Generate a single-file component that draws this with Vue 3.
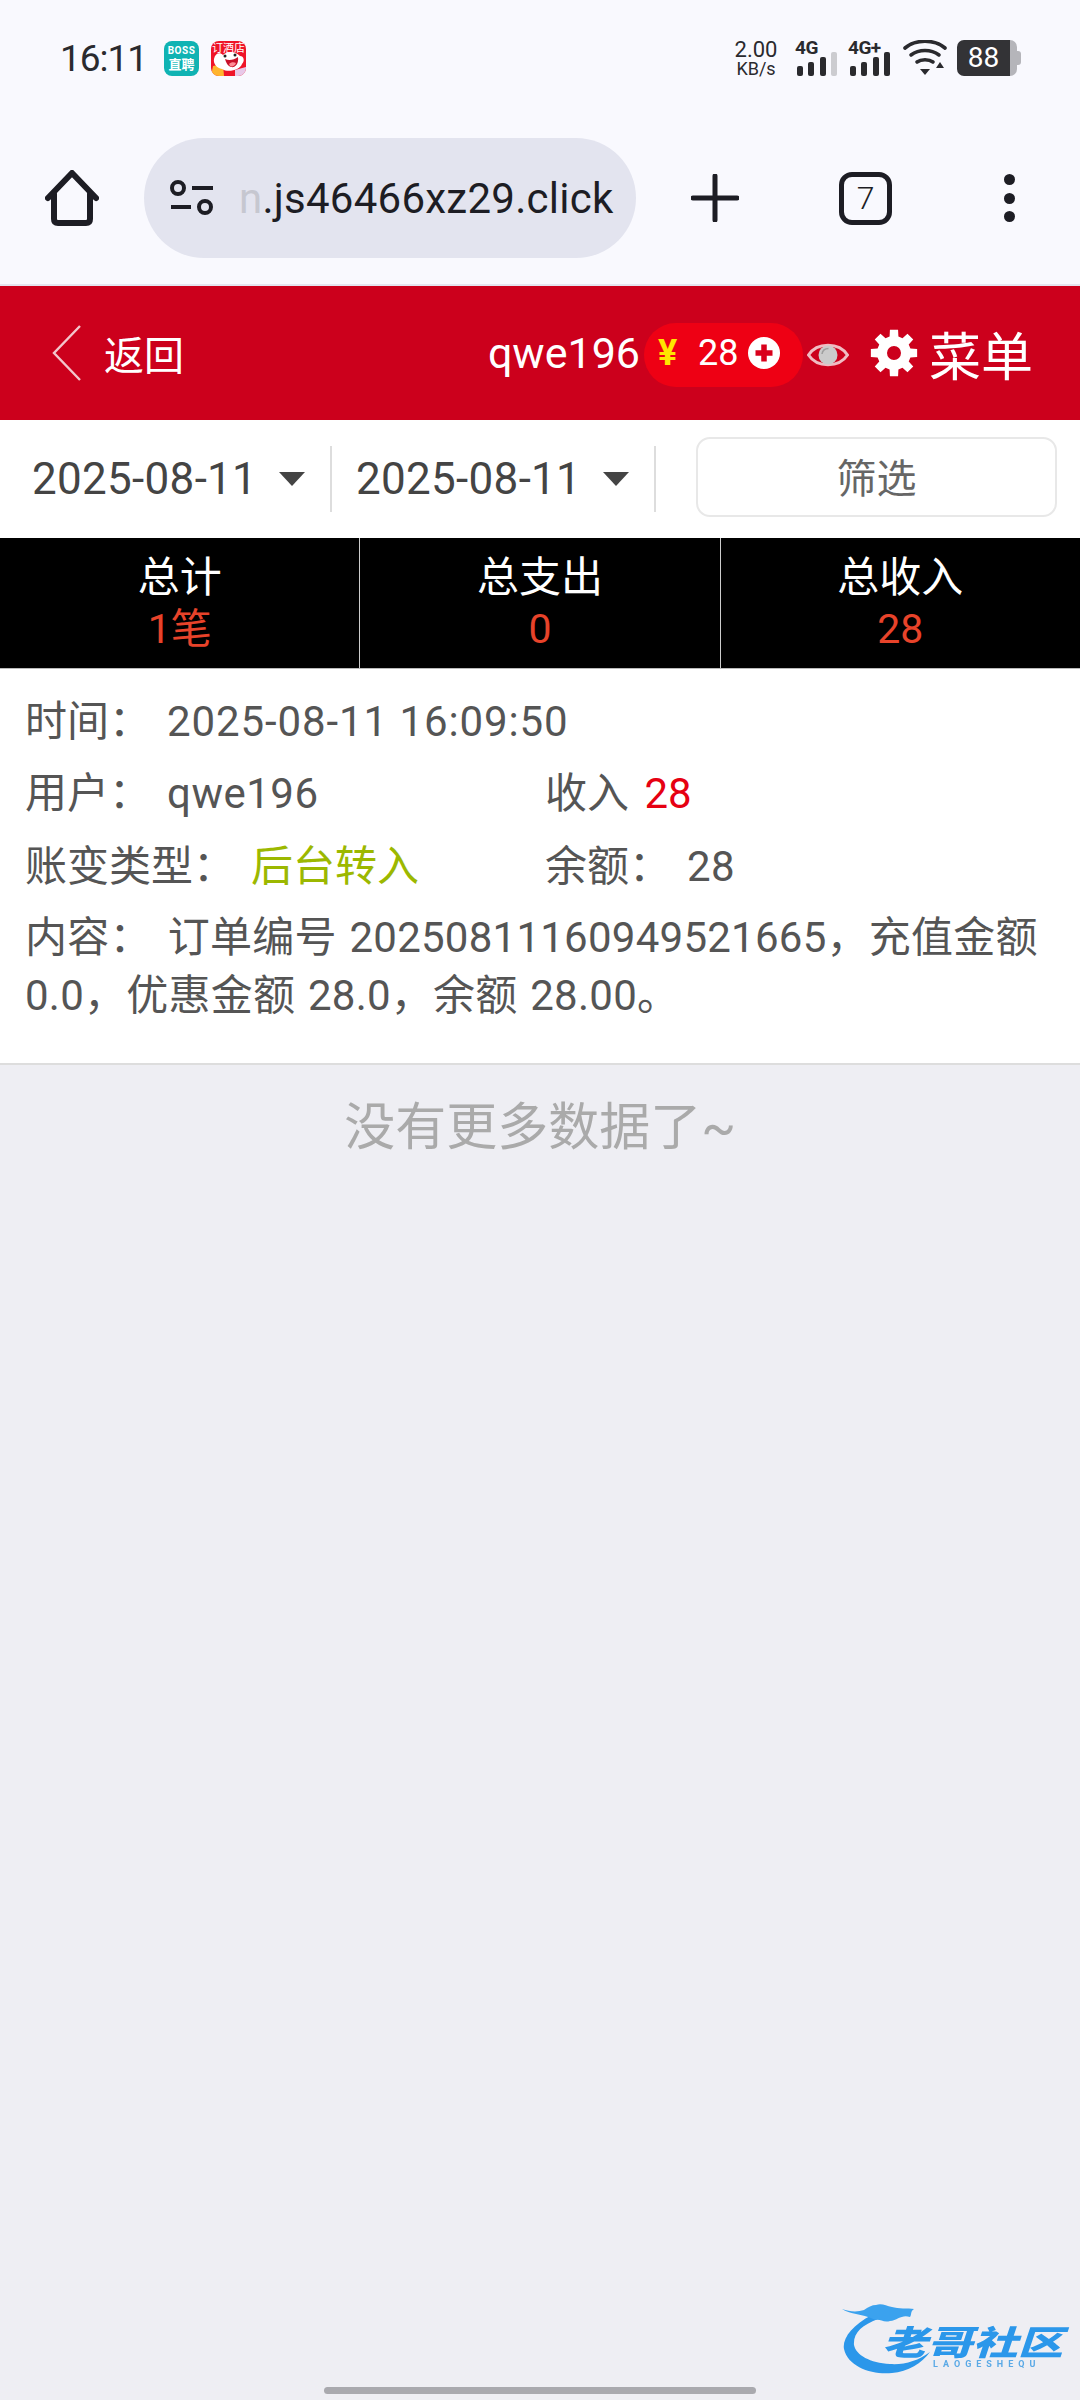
<template>
  <div class="page">
    <div class="status-bar">
      <span class="clock">16:11</span>
      <div class="app-icon boss"><b>BOSS</b><b class="boss-cn">直聘</b></div>
      <div class="app-icon hotel">
        <span class="hotel-text">订酒店</span>
        <svg class="hotel-dog" viewBox="0 0 35 35">
          <path d="M2 25 L12 23 L13 35 L0 35Z" fill="#ffb52e" />
          <path d="M24 29 L35 26 V35 H24Z" fill="#e8c8e8" />
          <path d="M3 18 C4 12 9 11 12 14 C16 10 24 10 29 15 C33 15 34 20 31 23 C29 29 17 32 11 28 C6 27 2 23 3 18Z" fill="#fff" />
          <path d="M14 18 C18 20 23 19 27 16 C28 23 24 27 20 26 C17 25 15 22 14 18Z" fill="#c9122a" />
          <path d="M18 23 C20 21 23 21 25 22 C24 25 21 26 19 25Z" fill="#ff8d96" />
          <circle cx="14" cy="15" r="1.5" fill="#222" />
          <circle cx="24" cy="14" r="1.5" fill="#222" />
        </svg>
      </div>
      <div class="status-right">
        <div class="net-speed"><span>2.00</span><span class="unit">KB/s</span></div>
        <div class="signal">
          <span class="sim">4G</span>
          <div class="bars">
            <i v-for="(h, i) in [10, 14, 19]" :key="i" class="bar" :style="{ height: h + 'px' }"></i>
            <i class="bar off" style="height: 24px"></i>
          </div>
        </div>
        <div class="signal">
          <span class="sim">4G+</span>
          <div class="bars">
            <i v-for="(h, i) in [10, 14, 19, 24]" :key="i" class="bar" :style="{ height: h + 'px' }"></i>
          </div>
        </div>
        <svg class="wifi" viewBox="0 0 44 36" fill="none" stroke="#2a2a2e" stroke-width="3.6" stroke-linecap="round">
          <path d="M2 8 C13 -1 31 -1 42 8" />
          <path d="M8 15 C16 9 28 9 36 15" />
          <path d="M14 22 C18 19 26 19 30 22" />
          <path d="M17 29 L27 29 L22 35 Z" fill="#2a2a2e" stroke="none" />
          <path d="M33 28 L37 22 L41 28 Z" fill="#2a2a2e" stroke="none" />
        </svg>
        <div class="battery">
          <div class="battery-body"><span class="battery-fill">88</span></div>
          <i class="battery-cap"></i>
        </div>
      </div>
    </div>

    <div class="browser-bar">
      <svg class="home" viewBox="0 0 54 56" fill="none" stroke="#1d1d24" stroke-width="6" stroke-linecap="round" stroke-linejoin="round">
        <path d="M3 28 L27 3 L51 28" />
        <path d="M9 24 V49 Q9 53 13 53 H41 Q45 53 45 49 V24" />
      </svg>
      <div class="url-pill">
        <svg class="tune" viewBox="0 0 44 38" fill="none" stroke="#1d1d24" stroke-width="4">
          <circle cx="8" cy="9" r="6" />
          <path d="M22 9 H43" />
          <path d="M1 28 H21" />
          <circle cx="35" cy="28" r="6" />
        </svg>
        <div class="url-text"><span class="url-fade">n</span>.js46466xz29.click</div>
      </div>
      <svg class="plus" viewBox="0 0 48 48" stroke="#1d1d24" stroke-width="5" stroke-linecap="round">
        <path d="M24 2 V46 M2 24 H46" />
      </svg>
      <div class="tabs">7</div>
      <div class="more"><i></i><i></i><i></i></div>
    </div>

    <header class="top-bar">
      <div class="back">
        <svg class="back-arrow" viewBox="0 0 30 56" fill="none" stroke="#f3c6cc" stroke-width="2.4">
          <path d="M28 1 L2 28 L28 55" />
        </svg>
        <span>返回</span>
      </div>
      <div class="top-right">
        <span class="username">qwe196</span>
        <div class="balance">
          <span class="yen">¥</span>
          <span class="amount">28</span>
          <svg class="add" viewBox="0 0 32 32">
            <circle cx="16" cy="16" r="16" fill="#fff" />
            <path d="M16 7.5 V24.5 M7.5 16 H24.5" stroke="#d9001b" stroke-width="5.5" />
          </svg>
        </div>
        <svg class="eye" viewBox="0 0 42 28">
          <path d="M1.5 14 C10 1 32 1 40.5 14 C32 27 10 27 1.5 14Z" fill="none" stroke="#f0bcc3" stroke-width="3" />
          <circle cx="21" cy="14" r="9.5" fill="#cbcbcb" />
          <path d="M15 13 C15.5 9.5 18 7.5 21.5 7.5" fill="none" stroke="#9f9f9f" stroke-width="1.6" />
        </svg>
        <svg class="gear" viewBox="-24 -24 48 48">
          <path fill="#fff" fill-rule="evenodd" :d="gearPath" />
        </svg>
        <span class="menu-label">菜单</span>
      </div>
    </header>

    <div class="filter-row">
      <div class="date-select" v-for="d in dates" :key="d.id">
        <span>{{ d.value }}</span>
        <i class="caret"></i>
      </div>
      <button class="filter-btn">筛选</button>
    </div>

    <div class="stats">
      <div class="stat" v-for="s in stats" :key="s.label">
        <div class="stat-label">{{ s.label }}</div>
        <div class="stat-value">{{ s.value }}</div>
      </div>
    </div>

    <div class="record">
      <div class="line"><span class="key">时间：</span><span class="time">2025-08-11 16:09:50</span></div>
      <div class="two-col">
        <div class="line"><span class="key">用户：</span><span class="spaced">qwe196</span></div>
        <div class="line">收入 <span class="income">28</span></div>
      </div>
      <div class="two-col">
        <div class="line"><span class="key">账变类型：</span><span class="kind">后台转入</span></div>
        <div class="line"><span class="key">余额：</span><span class="spaced">28</span></div>
      </div>
      <div class="content"><span class="key">内容：</span>订单编号 20250811160949521665，充值金额 0.0，优惠金额 28.0，余额 28.00。</div>
    </div>

    <div class="no-more">没有更多数据了~</div>

    <div class="watermark">
      <svg class="dragon" viewBox="0 0 90 72">
        <path d="M30 12 C10 22 0 36 2 46 C6 64 30 72 50 70 C66 69 80 60 88 49 C76 58 62 62 48 61 C28 60 14 52 12 42 C11 30 20 22 36 16Z" fill="#2b97ea" />
        <path d="M0 6 C8 9 16 9 22 7 C26 4 30 2 34 2 C40 0 44 3 50 4 C56 6 66 5 72 6 C68 9 70 11 68 14 C60 11 56 17 48 18 C42 20 38 16 34 17 L26 14 C18 11 8 11 0 6Z" fill="#3ba2ee" />
      </svg>
      <div class="mark-text">
        <div class="mark-cn">老哥社区</div>
        <div class="mark-en">LAOGESHEQU</div>
      </div>
    </div>

    <div class="gesture-bar"></div>
  </div>
</template>

<script setup>
const dates = [
  { id: 'start', value: '2025-08-11' },
  { id: 'end', value: '2025-08-11' }
]

const stats = [
  { label: '总计', value: '1笔' },
  { label: '总支出', value: '0' },
  { label: '总收入', value: '28' }
]

// 8 tooth cog with a hole in the middle
const buildGear = () => {
  const point = (r, deg) => {
    const a = (deg - 90) * Math.PI / 180
    return `${(r * Math.cos(a)).toFixed(2)} ${(r * Math.sin(a)).toFixed(2)}`
  }
  let d = ''
  for (let i = 0; i < 8; i++) {
    const c = i * 45
    d += `${i ? 'L' : 'M'}${point(17, c - 15)} L${point(23.5, c - 10)} L${point(23.5, c + 10)} L${point(17, c + 15)} `
  }
  return `${d}Z M7 0 A7 7 0 1 0 -7 0 A7 7 0 1 0 7 0Z`
}

const gearPath = buildGear()
</script>

<style>
html,
body {
  margin: 0;
  background: #eeeef3;
}
</style>

<style scoped>
.page {
  position: relative;
  width: 1080px;
  height: 2400px;
  overflow: hidden;
  background: #eeeef3;
  font-family: Roboto, "Noto Sans CJK SC", sans-serif;
  color: #555;
}

/* system status bar */
.status-bar {
  height: 116px;
  box-sizing: border-box;
  display: flex;
  align-items: center;
  padding: 0 59px 0 60px;
  background: #f9f9fe;
}

.clock {
  font-size: 37px;
  letter-spacing: -1px;
  color: #2a2a2e;
  margin-right: 24px;
  width: 80px;
}

.app-icon {
  width: 35px;
  height: 35px;
  border-radius: 8px;
  margin-right: 12px;
  overflow: hidden;
  position: relative;
  color: #fff;
}

.boss {
  background: #10b3b3;
  display: flex;
  flex-direction: column;
  align-items: center;
  justify-content: center;
  font-size: 10px;
  line-height: 13px;
  letter-spacing: .5px;
}

.boss-cn {
  font-size: 13px;
  line-height: 15px;
  letter-spacing: 0;
}

.hotel {
  background: #ef1428;
}

.hotel-text {
  position: absolute;
  top: 1px;
  left: 1px;
  font-size: 11px;
  line-height: 13px;
  white-space: nowrap;
}

.hotel-dog {
  position: absolute;
  left: 0;
  top: 0;
  width: 35px;
  height: 35px;
}

.status-right {
  margin-left: auto;
  display: flex;
  align-items: center;
  height: 40px;
}

.net-speed {
  display: flex;
  flex-direction: column;
  align-items: center;
  width: 42px;
  color: #2a2a2e;
  font-size: 22px;
  line-height: 21px;
  margin-right: 18px;
}

.net-speed .unit {
  font-size: 18px;
  line-height: 17px;
}

.signal {
  width: 42px;
  height: 36px;
  position: relative;
  margin-right: 11px;
}

.signal:nth-child(3) {
  margin-right: 13px;
}

.sim {
  position: absolute;
  top: 0;
  left: 0;
  font-size: 19px;
  line-height: 16px;
  font-weight: 700;
  letter-spacing: -.5px;
  color: #2a2a2e;
}

.bars {
  position: absolute;
  left: 2px;
  bottom: 0;
  display: flex;
  align-items: flex-end;
  gap: 5.4px;
}

.bar {
  display: block;
  width: 6px;
  background: #2a2a2e;
  border-radius: 2px;
}

.bar.off {
  background: #ccccd0;
}

.wifi {
  width: 44px;
  height: 36px;
  margin-right: 10px;
}

.battery {
  display: flex;
  align-items: center;
}

.battery-body {
  width: 60px;
  height: 36px;
  border-radius: 7px;
  background: linear-gradient(to right, #333336 53px, #b5b5ba 53px);
  overflow: hidden;
}

.battery-fill {
  display: block;
  width: 53px;
  text-align: center;
  color: #fff;
  font-size: 28px;
  line-height: 36px;
}

.battery-cap {
  width: 4px;
  height: 14px;
  background: #b5b5ba;
  border-radius: 0 3px 3px 0;
}

/* browser toolbar */
.browser-bar {
  height: 170px;
  box-sizing: border-box;
  display: flex;
  align-items: flex-start;
  padding: 22px 0 0 45px;
  background: #f9f9fe;
  border-bottom: 2px solid #e4e4ee;
}

.home {
  width: 54px;
  height: 56px;
  margin-top: 32px;
}

.url-pill {
  width: 492px;
  height: 120px;
  margin-left: 45px;
  border-radius: 60px;
  background: #e3e4ef;
  display: flex;
  align-items: center;
  padding-left: 26px;
  box-sizing: border-box;
  overflow: hidden;
}

.tune {
  width: 44px;
  height: 38px;
  flex-shrink: 0;
}

.url-text {
  margin-left: 25px;
  font-size: 42px;
  letter-spacing: .25px;
  color: #1d1d24;
  white-space: nowrap;
}

.url-fade {
  color: #c6c7d0;
}

.plus {
  width: 48px;
  height: 48px;
  margin: 36px 0 0 55px;
}

.tabs {
  width: 53px;
  height: 53px;
  box-sizing: border-box;
  margin: 34px 0 0 100px;
  border: 5px solid #1d1d24;
  border-radius: 13px;
  text-align: center;
  font-size: 32px;
  font-weight: 300;
  line-height: 43px;
  color: #1d1d24;
}

.more {
  margin: 36px 0 0 112px;
  display: flex;
  flex-direction: column;
  gap: 7.5px;
}

.more i {
  width: 11px;
  height: 11px;
  border-radius: 50%;
  background: #1d1d24;
}

/* page header */
.top-bar {
  height: 134px;
  background: #cc001c;
  display: flex;
  align-items: center;
  justify-content: space-between;
  padding: 0 47px 0 52px;
  color: #fff;
  box-sizing: border-box;
}

.back {
  display: flex;
  align-items: center;
  font-size: 40px;
}

.back-arrow {
  width: 30px;
  height: 56px;
  margin-right: 22px;
}

.top-right {
  display: flex;
  align-items: center;
}

.username {
  font-size: 43px;
}

.balance {
  display: flex;
  align-items: center;
  width: 159px;
  height: 64px;
  margin: 4px 0 0 4px;
  box-sizing: border-box;
  padding: 0 0 4px 14px;
  border-radius: 32px;
  background: #ee0014;
  font-size: 36px;
}

.yen {
  color: #ffe600;
  font-weight: 700;
  width: 40px;
}

.amount {
  width: 40px;
}

.add {
  width: 32px;
  height: 32px;
  margin-left: 10px;
}

.eye {
  width: 42px;
  height: 28px;
  margin: 4px 0 0 4px;
}

.gear {
  width: 48px;
  height: 48px;
  margin-left: 21px;
}

.menu-label {
  font-size: 52px;
  margin-left: 11px;
}

/* date filter */
.filter-row {
  height: 118px;
  background: #fff;
  display: flex;
  align-items: center;
  padding: 0 23px 0 32px;
  box-sizing: border-box;
}

.date-select {
  display: flex;
  align-items: center;
  height: 66px;
  font-size: 44px;
  letter-spacing: .3px;
  color: #444;
  width: 300px;
  box-sizing: border-box;
  border-right: 2px solid #ddd;
  margin-right: 24px;
  flex-shrink: 0;
}

.date-select:nth-child(2) {
  margin-right: 40px;
}

.caret {
  width: 0;
  height: 0;
  margin-left: 22px;
  border-left: 13px solid transparent;
  border-right: 13px solid transparent;
  border-top: 14px solid #444;
}

.filter-btn {
  flex: 1;
  height: 80px;
  margin-bottom: 4px;
  padding: 0 0 3px;
  background: #fff;
  border: 2px solid #e8e8e8;
  border-radius: 14px;
  font-family: inherit;
  font-size: 40px;
  color: #666;
}

/* totals */
.stats {
  height: 131px;
  display: flex;
  background: #000;
  border-bottom: 1px solid #bbb;
  box-sizing: border-box;
}

.stat {
  flex: 1;
  text-align: center;
  padding-top: 14px;
  box-sizing: border-box;
  border-right: 1px solid #ccc;
}

.stat:last-child {
  border-right: none;
}

.stat-label {
  font-size: 42px;
  line-height: 52px;
  color: #fff;
}

.stat-value {
  font-size: 41px;
  line-height: 50px;
  color: #e8432a;
}

/* record */
.record {
  height: 396px;
  box-sizing: border-box;
  background: #fff;
  padding: 17px 25px 0;
  border-bottom: 2px solid #ddd;
  font-size: 42px;
  color: #555;
}

.line {
  height: 72px;
  line-height: 72px;
  white-space: nowrap;
}

.two-col {
  display: flex;
}

.two-col .line {
  height: 73px;
}

.two-col .line:first-child {
  width: 520px;
}

.key {
  margin-right: 16px;
}

.time {
  letter-spacing: .9px;
}

.spaced {
  letter-spacing: .5px;
}

.income {
  color: #e60012;
  margin-left: 5px;
}

.kind {
  color: #9cb800;
}

.content {
  line-height: 58px;
  padding-top: 5px;
  letter-spacing: .25px;
  word-spacing: 2px;
}

.no-more {
  text-align: center;
  font-size: 51px;
  line-height: 126px;
  color: #aaa;
}

/* overlays */
.watermark {
  position: absolute;
  left: 842px;
  top: 2303px;
  display: flex;
  filter: blur(.5px);
}

.dragon {
  width: 90px;
  height: 72px;
  flex-shrink: 0;
}

.mark-text {
  margin-left: -50px;
  margin-top: 20px;
}

.mark-cn {
  font-size: 34px;
  line-height: 36px;
  font-weight: 900;
  font-style: italic;
  color: #2b97ea;
  white-space: nowrap;
  transform: scaleX(1.33);
  transform-origin: left center;
  font-family: "Noto Sans CJK SC", sans-serif;
}

.mark-en {
  font-size: 9px;
  font-weight: 700;
  letter-spacing: 5px;
  line-height: 10px;
  padding-left: 51px;
  white-space: nowrap;
  color: #5aa9e6;
}

.gesture-bar {
  position: absolute;
  left: 324px;
  top: 2387px;
  width: 432px;
  height: 7px;
  border-radius: 4px;
  background: #a9a9ae;
}
</style>
